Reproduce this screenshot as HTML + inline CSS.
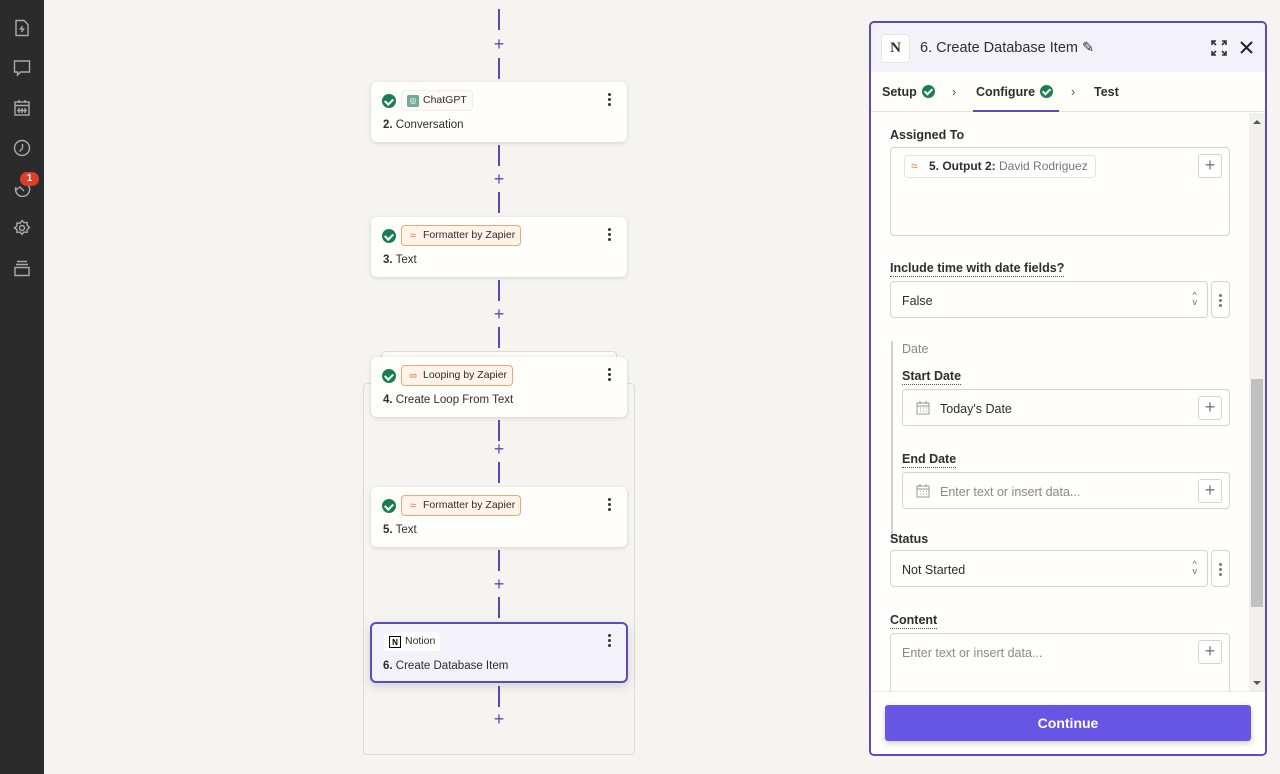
<!DOCTYPE html>
<html><head><meta charset="utf-8"><style>
*{box-sizing:border-box;margin:0;padding:0}
body{width:1280px;height:774px;overflow:hidden;background:#f5f4f1;font-family:"Liberation Sans",sans-serif;position:relative;color:#2d2e2e}
.sb{position:absolute;left:0;top:0;width:44px;height:774px;background:#2b2b2b}
.sb svg{position:absolute;left:13px}
.ln{position:absolute;left:498px;width:2px;background:#5a4ab8}
.pl{position:absolute;left:492px;width:14px;height:14px;color:#5a4ab8;font-size:18px;line-height:14px;text-align:center}
.card{position:absolute;left:371px;width:256px;height:60px;background:#fffefb;border-radius:6px;box-shadow:0 1px 4px rgba(0,0,0,.15)}
.card .ck{position:absolute;left:11px;top:12px;width:14px;height:14px;border-radius:50%;background:#1a7f50}
.card .ck:after{content:"";position:absolute;left:4px;top:3px;width:4px;height:6px;border:solid #fff;border-width:0 2px 2px 0;transform:rotate(45deg)}
.tag{position:absolute;left:30px;top:8px;height:21px;border-radius:4px;font-size:10.5px;line-height:19px;padding:0 5px 0 21px;border:1px solid #eee;background:#fff}
.tag.o{border-color:#f0a579;background:#fff3ea}
.tag i{position:absolute;left:5px;top:4px;width:12px;height:12px;font-style:normal;font-size:11px;line-height:12px;text-align:center;color:#e8743b}
.card .t{position:absolute;left:12px;top:37px;font-size:11.5px}
.card .t b{font-weight:bold}
.dots{position:absolute;right:16px;top:11px;width:3px}
.dots span{display:block;width:3px;height:3px;border-radius:50%;background:#333;margin-bottom:2px}
.panel{position:absolute;left:869px;top:21px;width:398px;height:735px;border:2px solid #5b4bbd;border-radius:5px;background:#fffefb;overflow:hidden}
.hd{position:absolute;left:0;top:0;width:100%;height:49px;background:#f3f2fb}
.tabs{position:absolute;top:49px;left:0;width:100%;height:40px;border-bottom:1px solid #e5e4e0;font-size:12.5px;font-weight:bold}
.tabs span{position:absolute;top:13px}
.gc{display:inline-block;width:13px;height:13px;border-radius:50%;background:#1a7f50;vertical-align:-2px;margin-left:5px;position:relative}
.gc:after{content:"";position:absolute;left:4px;top:2px;width:3px;height:6px;border:solid #fff;border-width:0 2px 2px 0;transform:rotate(45deg)}
.lb{position:absolute;font-size:12.5px;font-weight:bold;color:#2d2e2e}
.lb.u{border-bottom:1px dotted #555;padding-bottom:1px}
.box{position:absolute;border:1px solid #d5d4d0;border-radius:4px;background:#fffefb}
.pb{position:absolute;width:24px;height:24px;border:1px solid #d5d4d0;border-radius:3px;background:#fff;color:#777;font-size:18px;line-height:21px;text-align:center}
.ph{position:absolute;font-size:12.5px;color:#8a8a88}
.val{position:absolute;font-size:12.5px;color:#2d2e2e}
</style></head><body>
<div class="sb">
<svg style="top:19px" width="18" height="18" viewBox="0 0 18 18" fill="none" stroke="#aaa" stroke-width="1.4"><path d="M3 1.5h8l4 4v11H3z"/><path d="M9.5 7l-2 3h3l-2 3"/></svg>
<svg style="top:59px" width="18" height="18" viewBox="0 0 18 18" fill="none" stroke="#aaa" stroke-width="1.4"><path d="M1.5 2h15v11h-9l-3 3v-3h-3z"/></svg>
<svg style="top:99px" width="18" height="18" viewBox="0 0 18 18" fill="none" stroke="#aaa" stroke-width="1.4"><rect x="2" y="3" width="14" height="13"/><path d="M2 6.5h14M6 1v3M12 1v3M6 9v5M9 9v5M12 9v5M4 11.5h10"/></svg>
<svg style="top:139px" width="18" height="18" viewBox="0 0 18 18" fill="none" stroke="#aaa" stroke-width="1.4"><circle cx="9" cy="9" r="7.5"/><path d="M9.5 5v4.5l-3 3"/></svg>
<svg style="top:179px" width="18" height="18" viewBox="0 0 18 18" fill="none" stroke="#aaa" stroke-width="1.4"><path d="M15 6a7 7 0 1 1-12 2M3 11l4-3 4 4"/></svg>
<div style="position:absolute;left:20px;top:172px;width:19px;height:14px;border-radius:7px;background:#d93f2b;color:#fff;font-size:10px;font-weight:bold;text-align:center;line-height:14px">1</div>
<svg style="top:219px" width="18" height="18" viewBox="0 0 18 18" fill="none" stroke="#aaa" stroke-width="1.4"><circle cx="9" cy="9" r="2.5"/><path d="M9 1.5l2 2.2 3-.3.3 3 2.2 2-2.2 2-.3 3-3-.3-2 2.2-2-2.2-3 .3-.3-3L1.5 9l2.2-2 .3-3 3 .3z"/></svg>
<svg style="top:259px" width="18" height="18" viewBox="0 0 18 18" fill="none" stroke="#aaa" stroke-width="1.4"><path d="M4 2.5h10M3 5.5h12M2 8.5h14v8H2z"/></svg>
</div>

<div style="position:absolute;left:363px;top:383px;width:272px;height:372px;border:1px solid #dcdbd7;border-radius:4px"></div>
<div style="position:absolute;left:381px;top:351px;width:236px;height:8px;border:1px solid #dcdbd7;border-bottom:none;border-radius:4px 4px 0 0;background:#fbfaf7"></div>

<div class="ln" style="top:9px;height:21px"></div><div class="pl" style="top:37px">+</div><div class="ln" style="top:58px;height:21px"></div>
<div class="ln" style="top:145px;height:21px"></div><div class="pl" style="top:172px">+</div><div class="ln" style="top:192px;height:21px"></div>
<div class="ln" style="top:280px;height:21px"></div><div class="pl" style="top:307px">+</div><div class="ln" style="top:327px;height:21px"></div>
<div class="ln" style="top:420px;height:21px"></div><div class="pl" style="top:442px">+</div><div class="ln" style="top:462px;height:21px"></div>
<div class="ln" style="top:550px;height:21px"></div><div class="pl" style="top:577px">+</div><div class="ln" style="top:597px;height:21px"></div>
<div class="ln" style="top:686px;height:21px"></div><div class="pl" style="top:712px">+</div>

<div class="card" style="top:82px"><div class="ck"></div><div class="tag" style="background:#fbfaf7"><i style="background:#74aa9c;border-radius:2px;color:#fff;font-size:8px">◎</i>ChatGPT</div><div class="t"><b>2.</b> Conversation</div><div class="dots"><span></span><span></span><span></span></div></div>
<div class="card" style="top:217px"><div class="ck"></div><div class="tag o"><i>≈</i>Formatter by Zapier</div><div class="t"><b>3.</b> Text</div><div class="dots"><span></span><span></span><span></span></div></div>
<div class="card" style="top:357px"><div class="ck"></div><div class="tag o"><i>∞</i>Looping by Zapier</div><div class="t"><b>4.</b> Create Loop From Text</div><div class="dots"><span></span><span></span><span></span></div></div>
<div class="card" style="top:487px"><div class="ck"></div><div class="tag o"><i>≈</i>Formatter by Zapier</div><div class="t"><b>5.</b> Text</div><div class="dots"><span></span><span></span><span></span></div></div>
<div class="card" style="top:622px;left:370px;width:258px;height:61px;background:#f3f2fb;border:2px solid #5b4bbd;box-shadow:0 3px 10px rgba(0,0,0,.15)"><div class="tag" style="left:11px;top:7px;background:#fff;border-color:#f3f2fb"><i style="color:#000;border:1px solid #000;font-size:8px;font-weight:bold;background:#fff">N</i>Notion</div><div class="t" style="left:11px;top:36px"><b>6.</b> Create Database Item</div><div class="dots" style="right:15px;top:10px"><span></span><span></span><span></span></div></div>

<div class="panel">
<div class="hd">
<div style="position:absolute;left:10px;top:11px;width:29px;height:29px;border:1px solid #e5e4e0;border-radius:4px;background:#fff;font-family:'Liberation Serif',serif;font-weight:bold;font-size:15px;text-align:center;line-height:27px">N</div>
<div style="position:absolute;left:49px;top:17px;font-size:14.5px">6. Create Database Item ✎</div>
<svg style="position:absolute;left:340px;top:17px" width="16" height="16" viewBox="0 0 16 16" fill="none" stroke="#333" stroke-width="1.6"><path d="M1 5V1h4M11 1h4v4M15 11v4h-4M5 15H1v-4M1 1l4 4M15 1l-4 4M15 15l-4-4M1 15l4-4"/></svg>
<svg style="position:absolute;left:369px;top:18px" width="13" height="13" viewBox="0 0 13 13" stroke="#222" stroke-width="2"><path d="M1 1l11 11M12 1L1 12"/></svg>
</div>
<div class="tabs">
<span style="left:11px">Setup<i class="gc"></i></span>
<span style="left:81px;font-weight:normal;color:#555">›</span>
<span style="left:105px">Configure<i class="gc"></i></span>
<span style="left:200px;font-weight:normal;color:#555">›</span>
<span style="left:223px">Test</span>
<div style="position:absolute;left:102px;bottom:-1px;width:86px;height:2px;background:#5b4bbd"></div>
</div>
<div style="position:absolute;right:0;top:90px;width:16px;height:578px;background:#f1f0ee"><div style="position:absolute;left:2px;top:266px;width:12px;height:228px;background:#c1c1c1"></div><div style="position:absolute;left:4px;top:7px;border:4px solid transparent;border-bottom:4px solid #555;border-top:none"></div><div style="position:absolute;left:4px;bottom:6px;border:4px solid transparent;border-top:4px solid #555;border-bottom:none"></div></div>

<div class="lb" style="left:19px;top:105px">Assigned To</div>
<div class="box" style="left:19px;top:124px;width:340px;height:89px"><div style="position:absolute;left:13px;top:7px;height:23px;border:1px solid #e5e4e0;border-radius:4px;background:#fff;font-size:12px;line-height:21px;padding:0 7px 0 24px"><span style="position:absolute;left:6px;color:#e8743b">≈</span><b>5. Output 2:</b> <span style="color:#777">David Rodriguez</span></div><div class="pb" style="right:7px;top:6px">+</div></div>

<div class="lb u" style="left:19px;top:238px">Include time with date fields?</div>
<div class="box" style="left:19px;top:258px;width:318px;height:37px"><div class="val" style="left:11px;top:12px">False</div><div style="position:absolute;right:10px;top:10px;font-size:9px;color:#666;line-height:7px">^<br>v</div></div>
<div class="box" style="left:340px;top:258px;width:19px;height:37px"><div class="dots" style="right:7px;top:12px"><span style="background:#777"></span><span style="background:#777"></span><span style="background:#777"></span></div></div>

<div style="position:absolute;left:20px;top:318px;width:2px;height:200px;background:#d0cfcb"></div>
<div style="position:absolute;left:31px;top:319px;font-size:12.5px;color:#888">Date</div>
<div class="lb u" style="left:31px;top:346px">Start Date</div>
<div class="box" style="left:31px;top:366px;width:328px;height:37px"><svg style="position:absolute;left:13px;top:11px" width="14" height="14" viewBox="0 0 14 14" fill="none" stroke="#999" stroke-width="1"><rect x="1" y="2" width="12" height="11"/><path d="M1 5h12M4 0v3M10 0v3M4 7h1M7 7h1M10 7h1M4 10h1M7 10h1M10 10h1"/></svg><div class="val" style="left:37px;top:12px">Today's Date</div><div class="pb" style="right:7px;top:6px">+</div></div>
<div class="lb u" style="left:31px;top:429px">End Date</div>
<div class="box" style="left:31px;top:449px;width:328px;height:37px"><svg style="position:absolute;left:13px;top:11px" width="14" height="14" viewBox="0 0 14 14" fill="none" stroke="#999" stroke-width="1"><rect x="1" y="2" width="12" height="11"/><path d="M1 5h12M4 0v3M10 0v3M4 7h1M7 7h1M10 7h1M4 10h1M7 10h1M10 10h1"/></svg><div class="ph" style="left:37px;top:12px">Enter text or insert data...</div><div class="pb" style="right:7px;top:6px">+</div></div>

<div class="lb" style="left:19px;top:509px">Status</div>
<div class="box" style="left:19px;top:527px;width:318px;height:37px"><div class="val" style="left:11px;top:12px">Not Started</div><div style="position:absolute;right:10px;top:10px;font-size:9px;color:#666;line-height:7px">^<br>v</div></div>
<div class="box" style="left:340px;top:527px;width:19px;height:37px"><div class="dots" style="right:7px;top:12px"><span style="background:#777"></span><span style="background:#777"></span><span style="background:#777"></span></div></div>

<div class="lb u" style="left:19px;top:590px">Content</div>
<div class="box" style="left:19px;top:610px;width:340px;height:70px"><div class="ph" style="left:11px;top:12px">Enter text or insert data...</div><div class="pb" style="right:7px;top:6px">+</div></div>

<div style="position:absolute;left:0;top:668px;width:100%;height:70px;background:#fffefb;border-top:1px solid #eceae6"></div>
<div style="position:absolute;left:14px;top:682px;width:366px;height:36px;background:#6656e3;border-radius:3px;color:#fff;font-weight:bold;font-size:14px;text-align:center;line-height:36px;box-shadow:0 2px 6px rgba(0,0,0,.2)">Continue</div>
</div>
</body></html>
